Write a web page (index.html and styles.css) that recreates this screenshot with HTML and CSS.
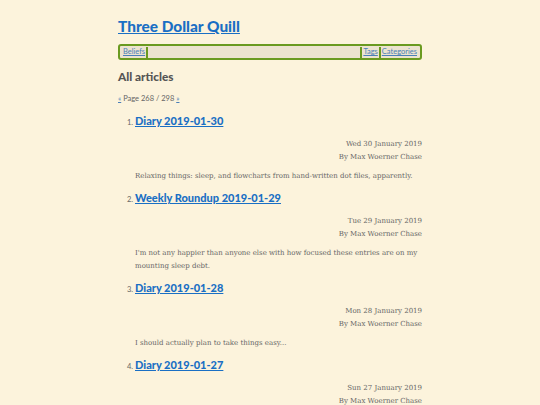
FILE: index.html
```html
<!DOCTYPE html>
<html>
<head>
<meta charset="utf-8">
<link rel="stylesheet" href="styles.css">
</head>
<body>
<div class="page">
  <header class="site-header">
    <h1 class="site-title"><a href="#">Three Dollar Quill</a></h1>
    <nav class="nav">
      <a href="#">Beliefs</a><span class="sep"></span>
      <span class="spacer"></span>
      <span class="sep"></span><a href="#">Tags</a><span class="sep"></span><a href="#">Categories</a>
    </nav>
  </header>
  <main>
    <h2 class="section-title">All articles</h2>
    <p class="pager"><a href="#">«</a> Page 268 / 298 <a href="#">»</a></p>
    <ol class="articles" start="1">
      <li class="article">
        <h3 class="article-title"><a href="#">Diary 2019-01-30</a></h3>
        <div class="meta">
          <div>Wed 30 January 2019</div>
          <div>By Max Woerner Chase</div>
        </div>
        <p class="summary">Relaxing things: sleep, and flowcharts from hand-written dot files, apparently.</p>
      </li>
      <li class="article">
        <h3 class="article-title"><a href="#">Weekly Roundup 2019-01-29</a></h3>
        <div class="meta">
          <div>Tue 29 January 2019</div>
          <div>By Max Woerner Chase</div>
        </div>
        <p class="summary">I'm not any happier than anyone else with how focused these entries are on my mounting sleep debt.</p>
      </li>
      <li class="article">
        <h3 class="article-title"><a href="#">Diary 2019-01-28</a></h3>
        <div class="meta">
          <div>Mon 28 January 2019</div>
          <div>By Max Woerner Chase</div>
        </div>
        <p class="summary">I should actually plan to take things easy...</p>
      </li>
      <li class="article">
        <h3 class="article-title"><a href="#">Diary 2019-01-27</a></h3>
        <div class="meta">
          <div>Sun 27 January 2019</div>
          <div>By Max Woerner Chase</div>
        </div>
      </li>
    </ol>
  </main>
</div>
</body>
</html>
```
FILE: styles.css
```css
html, body {
  margin: 0;
  padding: 0;
  background: #fcf3dc;
}
body {
  font-family: "DejaVu Serif", serif;
  color: #555;
}
.page {
  width: 304px;
  margin: 0 auto;
  padding-top: 16px;
}
a {
  color: #1a6fc4;
}
.site-title {
  margin: 0;
  font-family: Lato, sans-serif;
  font-weight: 900;
  font-size: 15.4px;
  line-height: 20px;
}
.nav {
  margin-top: 8px;
  display: flex;
  align-items: center;
  height: 12px;
  padding: 0 2px;
  border: 2px solid #6a9a20;
  border-radius: 3px;
  background: #ece3cf;
  font-family: Lato, sans-serif;
  font-size: 7.5px;
  line-height: 12px;
}
.nav a {
  color: #4a7fb8;
  padding: 0 1px;
}
.nav .sep {
  width: 2px;
  height: 11px;
  background: #6a9a20;
}
.nav .spacer {
  flex: 1;
}
.section-title {
  margin: 8px 0 0;
  font-family: Lato, sans-serif;
  font-weight: 900;
  font-size: 11.8px;
  line-height: 18px;
  color: #555;
}
.pager {
  margin: 8px 0 0;
  font-family: Lato, sans-serif;
  font-size: 7.5px;
  line-height: 10px;
  color: #666;
}
.pager a {
  color: #4a7fb8;
}
.articles {
  margin: 8px 0 0;
  padding-left: 17px;
  list-style: decimal;
}
.article::marker {
  font-family: Lato, sans-serif;
  font-size: 7.5px;
  color: #666;
}
.article-title {
  margin: 0;
  font-family: Lato, sans-serif;
  font-weight: 900;
  font-size: 11px;
  line-height: 18px;
}
.meta {
  margin-top: 8px;
  text-align: right;
  font-size: 7px;
  line-height: 12.5px;
  color: #666;
}
.summary {
  margin: 7px 0 6px;
  font-size: 7px;
  line-height: 13px;
  color: #666;
}
```
